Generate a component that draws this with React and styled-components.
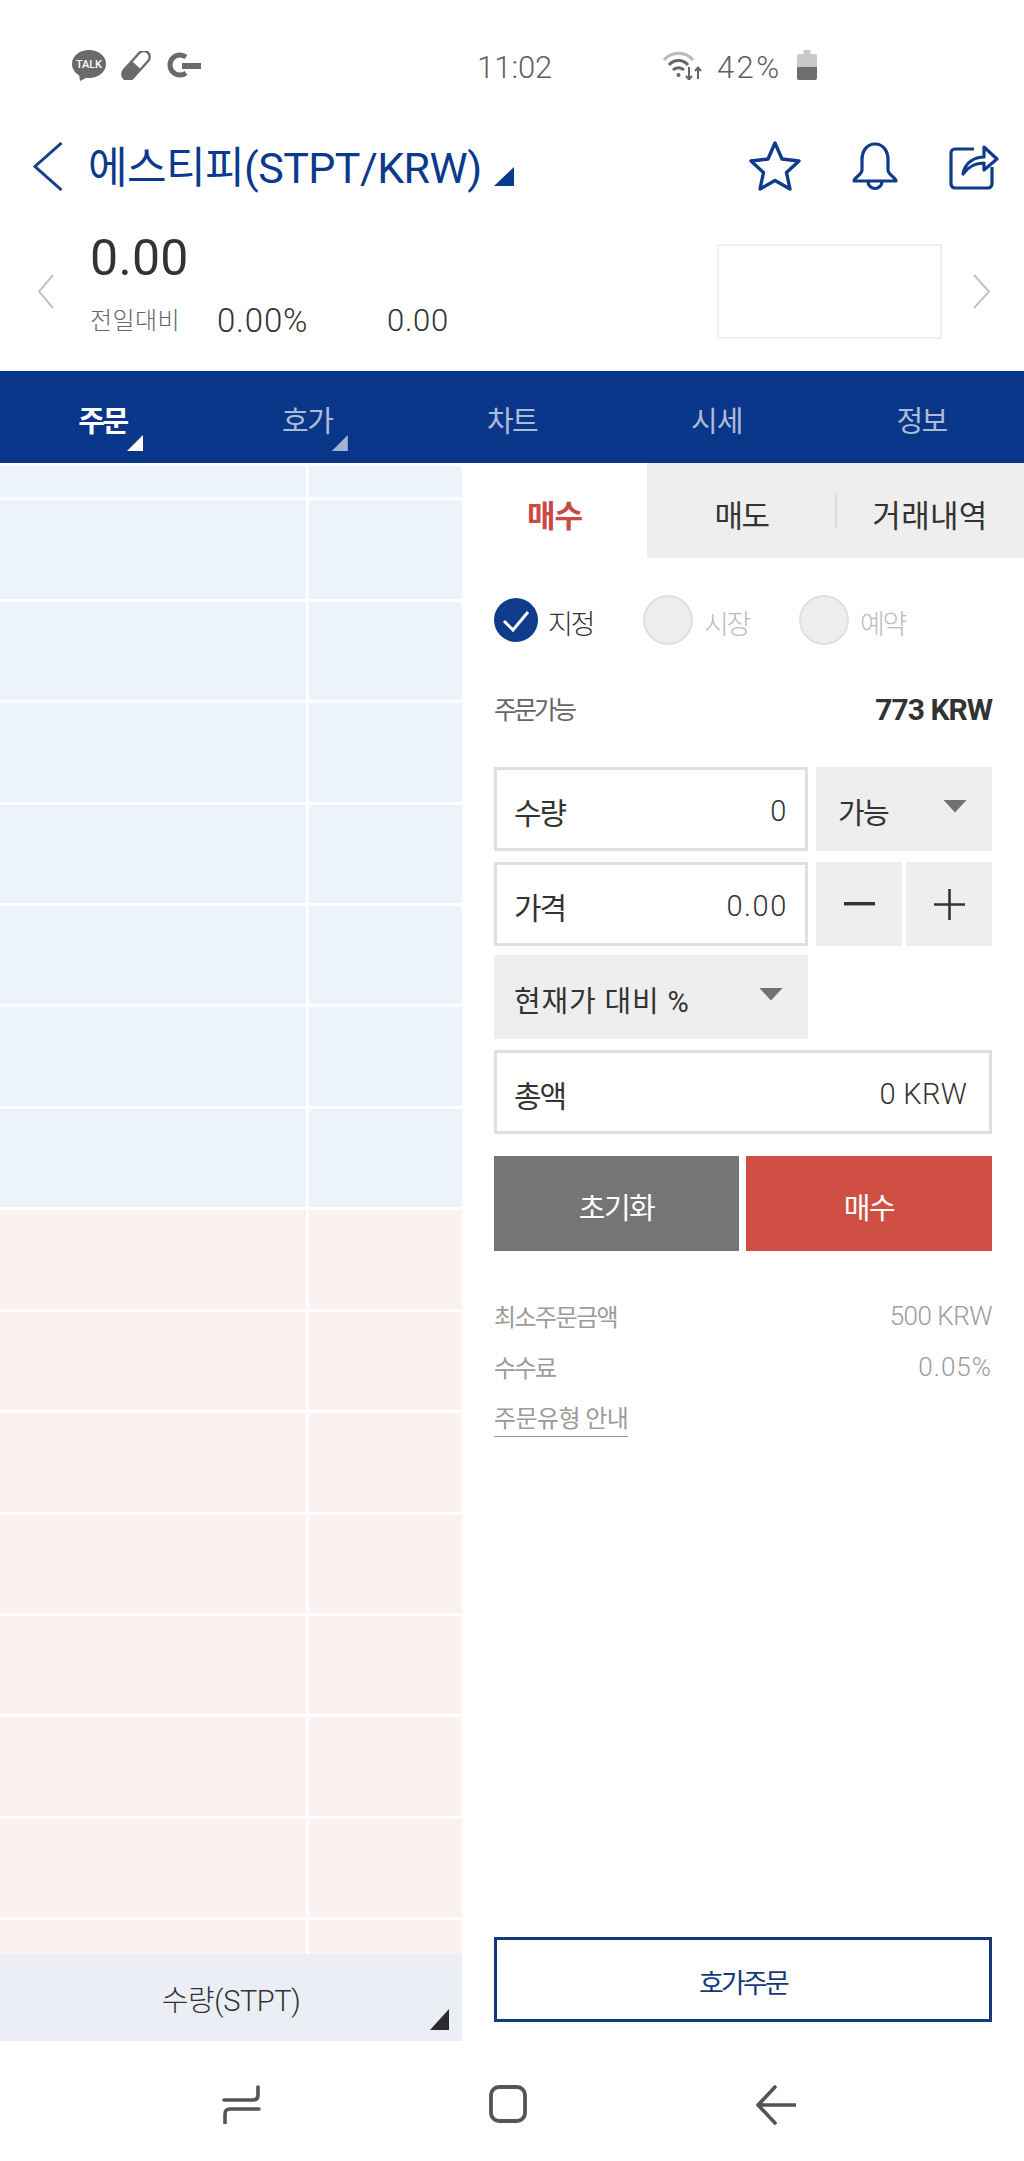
import React from 'react';
import styled, { createGlobalStyle } from 'styled-components';

const GlobalStyle = createGlobalStyle`
    html, body {
        margin: 0;
        padding: 0;
        background: #ffffff;
    }
    * {
        box-sizing: border-box;
    }
`

const Page = styled.div`
    width: 1024px;
    height: 2161px;
    overflow: hidden;
    background: #ffffff;
    display: flex;
    flex-direction: column;
    font-family: Roboto, "Noto Sans CJK KR", sans-serif;
    font-weight: 300;
    color: #333333;
`

const StatusBar = styled.div`
    height: 128px;
    padding: 2px 0 0 72px;
    display: grid;
    grid-template-columns: 405px 186px 1fr;
    align-items: center;
    color: #5f5f5f;
    font-size: 31px;
`
const StatusIcons = styled.div`
    display: flex;
    align-items: center;
    gap: ${props => props.$gap || 15}px;
`
const StatusText = styled.span`
    line-height: 36px;
    padding-top: 5px;
    letter-spacing: ${props => props.$track || 0}px;
`

const TitleBar = styled.div`
    height: 76px;
    padding: 0 25px 0 33px;
    display: flex;
    align-items: center;
`
const Title = styled.h1`
    margin: 0 0 0 25px;
    padding-top: 3px;
    font-size: 43px;
    font-weight: 400;
    letter-spacing: -0.55px;
    color: #0b3a8c;
    line-height: 50px;
`
const TitleMark = styled.svg`
    margin: 20px 0 0 12px;
`
const TitleActions = styled.div`
    margin-left: auto;
    display: flex;
    align-items: center;
    gap: 51px;
`

const Summary = styled.div`
    height: 167px;
    padding: 8px 33px 0 37px;
    display: flex;
    align-items: center;
`
const SummaryInfo = styled.div`
    align-self: flex-start;
    margin: 21px 0 0 37px;
    display: flex;
    flex-direction: column;
`
const Price = styled.div`
    font-size: 50px;
    line-height: 50px;
    font-weight: 400;
    margin-left: -1px;
    letter-spacing: 0.3px;
`
const ChangeRow = styled.div`
    margin-top: 23px;
    display: flex;
    align-items: center;
    line-height: 30px;
    font-size: 31px;
    font-weight: 300;
`
const ChangeLabel = styled.span`
    width: 127px;
    margin-left: -1px;
    font-size: 24px;
    color: #666666;
    letter-spacing: 0.4px;
`
const ChangeValue = styled.span`
    width: 170px;
    font-size: 33px;
    letter-spacing: 0.8px;
`
const ChangeAmount = styled.span`
    font-size: 31px;
    letter-spacing: 0.7px;
`
const Sparkline = styled.div`
    width: 225px;
    height: 95px;
    margin-left: auto;
    margin-right: 31px;
    border: 2px solid #efefef;
`

const TabBar = styled.nav`
    height: 92px;
    background: #0a3689;
    display: grid;
    grid-template-columns: repeat(5, 1fr);
`
const Tab = styled.div`
    position: relative;
    display: flex;
    align-items: center;
    justify-content: center;
    padding-top: 3px;
    font-size: 29px;
    letter-spacing: ${props => props.$track ?? -2.5}px;
    font-weight: ${props => (props.$active ? 700 : 400)};
    color: ${props => (props.$active ? '#ffffff' : '#aebbd6')};
`
const TabMark = styled.i`
    position: absolute;
    left: 127px;
    top: 64px;
    width: 16px;
    height: 16px;
    background: ${props => (props.$active ? '#ffffff' : '#a3b2d1')};
    clip-path: polygon(100% 0, 100% 100%, 0 100%);
`

const Main = styled.div`
    height: 1578px;
    display: grid;
    grid-template-columns: 462px 1fr;
`

const BookColumn = styled.section`
    display: flex;
    flex-direction: column;
    min-height: 0;
`
const Book = styled.div`
    flex: 1;
    min-height: 0;
    overflow: hidden;
    padding-top: 3px;
    display: grid;
    grid-template-columns: 306px 153px;
    grid-auto-rows: 98.43px;
    grid-template-rows: 31.3px;
    gap: 3px;
`
const BookCell = styled.div`
    background: ${props => (props.$side === 'ask' ? '#ecf3fb' : '#fbf1f0')};
`
const BookFooter = styled.div`
    position: relative;
    height: 87px;
    background: #eceef5;
    display: flex;
    align-items: center;
    justify-content: center;
    font-size: 29px;
    font-weight: 300;
    letter-spacing: -0.4px;
`
const FooterMark = styled.i`
    position: absolute;
    right: 13px;
    bottom: 11px;
    width: 19px;
    height: 21px;
    background: #2b2b2b;
    clip-path: polygon(100% 0, 100% 100%, 0 100%);
`

const OrderColumn = styled.section`
    display: flex;
    flex-direction: column;
    min-height: 0;
`
const OrderTabs = styled.div`
    height: 95px;
    display: grid;
    grid-template-columns: 185px 189px 188px;
`
const OrderTab = styled.div`
    display: flex;
    align-items: center;
    justify-content: center;
    position: relative;
    padding-top: 6px;
    font-size: 31px;
    letter-spacing: ${props => props.$track ?? -1.5}px;
    background: ${props => (props.$active ? '#ffffff' : '#eeeeee')};
    color: ${props => (props.$active ? '#c94a42' : '#333333')};
    font-weight: ${props => (props.$active ? 700 : 400)};
`
const TabDivider = styled.i`
    position: absolute;
    left: -1px;
    top: 30px;
    width: 2px;
    height: 35px;
    background: #dcdcdc;
`
const OrderForm = styled.div`
    flex: 1;
    min-height: 0;
    padding: 0 32px 19px;
    display: flex;
    flex-direction: column;
`
const TypeRow = styled.div`
    margin-top: 37px;
    height: 50px;
    display: grid;
    grid-template-columns: 149px 156px 1fr;
    align-items: center;
`
const TypeOption = styled.div`
    display: flex;
    align-items: center;
    font-size: 27px;
    letter-spacing: -2.4px;
    color: ${props => (props.$on ? '#333333' : '#bbbbbb')};
`
const TypeLabel = styled.span`
    margin-left: ${props => (props.$on ? 10 : 11)}px;
    padding-top: 4px;
`
const RadioOff = styled.i`
    width: 50px;
    height: 50px;
    border-radius: 50%;
    border: 2px solid #e0e0e0;
    background: #eeeeee;
`
const AvailableRow = styled.div`
    margin-top: 49px;
    height: 30px;
    display: flex;
    align-items: center;
    justify-content: space-between;
`
const AvailableLabel = styled.span`
    font-size: 25px;
    letter-spacing: -3px;
    color: #666666;
    font-weight: 400;
    padding-bottom: 3px;
`
const AvailableValue = styled.span`
    font-size: 30px;
    font-weight: 700;
    letter-spacing: -1px;
    color: #333333;
`
const Fields = styled.div`
    margin-top: 43px;
    display: grid;
    grid-template-columns: 314px 1fr;
    grid-template-rows: 95px 93px 95px 84px;
    column-gap: 8px;
`
const InputBox = styled.div`
    height: 84px;
    border: 3px solid #dfdfdf;
    padding: 3px 19px 0 17px;
    display: flex;
    align-items: center;
    justify-content: space-between;
    font-size: 30px;
    grid-column: ${props => (props.$wide ? '1 / -1' : 'auto')};
`
const InputLabel = styled.span`
    font-weight: 400;
    letter-spacing: -2px;
    color: #333333;
`
const InputValue = styled.span`
    font-size: 29px;
    font-weight: 300;
    letter-spacing: ${props => (props.$wide ? 0.3 : 1.6)}px;
    margin-right: ${props => (props.$wide ? 3 : -2)}px;
`
const SelectBox = styled.div`
    height: 84px;
    background: #eeeeee;
    padding: 3px 25px 0 ${props => props.$left || 22}px;
    display: flex;
    align-items: center;
    justify-content: space-between;
    font-size: 29px;
    font-weight: 400;
    letter-spacing: ${props => props.$track ?? -1.6}px;
`
const SelectMark = styled.i`
    width: 24px;
    height: 13px;
    margin-bottom: 9px;
    background: #717171;
    clip-path: polygon(0 0, 100% 0, 50% 100%);
`
const Stepper = styled.div`
    height: 84px;
    display: grid;
    grid-template-columns: 1fr 1fr;
    gap: 4px;
`
const StepButton = styled.div`
    background: #eeeeee;
    display: flex;
    align-items: center;
    justify-content: center;
`
const Actions = styled.div`
    margin-top: 22px;
    display: grid;
    grid-template-columns: 245px 246px;
    gap: 7px;
`
const ActionButton = styled.button`
    height: 95px;
    padding: 4px 0 0;
    border: 0;
    background: ${props => (props.$buy ? '#d04f45' : '#757575')};
    color: #ffffff;
    font-family: inherit;
    font-size: 29px;
    font-weight: 400;
    letter-spacing: -1.5px;
`
const InfoList = styled.div`
    margin-top: 39px;
    font-size: 24px;
    color: #9b9b9b;
`
const InfoRow = styled.div`
    height: 51px;
    display: flex;
    align-items: center;
    justify-content: space-between;
`
const InfoLabel = styled.span`
    font-weight: 400;
    letter-spacing: -1.6px;
`
const InfoValue = styled.span`
    font-size: 26px;
    font-weight: 300;
    letter-spacing: ${props => props.$track ?? -0.5}px;
`
const GuideLink = styled.a`
    margin-top: 5px;
    padding-bottom: 2px;
    border-bottom: 1px solid #999999;
    font-weight: 400;
    letter-spacing: -0.6px;
    line-height: 30px;
`
const BookOrderButton = styled.button`
    margin-top: auto;
    height: 85px;
    padding: 4px 0 0;
    border: 3px solid #153a7c;
    background: #ffffff;
    color: #153a7c;
    font-family: inherit;
    font-size: 27px;
    font-weight: 400;
    letter-spacing: -2.8px;
`

const SoftKeys = styled.div`
    height: 120px;
    padding: 44px 0 0 222px;
    display: flex;
    align-items: flex-start;
    gap: 228px;
`

const askRows = Array.from({ length: 8 });
const bidRows = Array.from({ length: 8 });

const App = () => {
    return (
        <Page>
            <GlobalStyle />
            <StatusBar>
                <StatusIcons>
                    <svg width="34" height="31" viewBox="0 0 34 31">
                        <ellipse cx="17" cy="14" rx="17" ry="14" fill="#6a6a6a" />
                        <path d="M7 24 L8 31 L16 27 Z" fill="#6a6a6a" />
                        <text x="17" y="18" textAnchor="middle" fontSize="11" fontFamily="Roboto" fontWeight="500" fill="#fff" textLength="26">TALK</text>
                    </svg>
                    <svg width="30" height="29" viewBox="0 0 30 29">
                        <g transform="rotate(42 15 14.5)">
                            <rect x="9" y="-3" width="12" height="35" rx="6" fill="#ffffff" stroke="#6a6a6a" strokeWidth="2.4" />
                            <path d="M9 14 H21 V26 A6 6 0 0 1 9 26 Z" fill="#6a6a6a" />
                        </g>
                    </svg>
                    <svg width="35" height="26" viewBox="0 0 35 26">
                        <path d="M20 5 A10 10 0 1 0 20 21" fill="none" stroke="#6a6a6a" strokeWidth="5" />
                        <rect x="16" y="11" width="19" height="6" fill="#6a6a6a" />
                    </svg>
                </StatusIcons>
                <StatusText>11:02</StatusText>
                <StatusIcons $gap={15}>
                    <svg width="39" height="29" viewBox="0 0 39 29">
                        <path d="M1 9 C9 0 22 0 30 9" fill="none" stroke="#b9b9b9" strokeWidth="3" />
                        <path d="M6 14 C11 8 20 8 25 14" fill="none" stroke="#666" strokeWidth="3" />
                        <path d="M10 19 C13 16 18 16 21 19" fill="none" stroke="#666" strokeWidth="3" />
                        <circle cx="15.5" cy="24" r="2" fill="#666" />
                        <path d="M26 16 V28 M23 25 L26 28.5 L29 25" fill="none" stroke="#666" strokeWidth="2" />
                        <path d="M35 28 V17 M32 20 L35 16.5 L38 20" fill="none" stroke="#666" strokeWidth="2" />
                    </svg>
                    <StatusText $track={2.4}>42%</StatusText>
                    <svg width="20" height="30" viewBox="0 0 20 30">
                        <rect x="6.5" y="0" width="7" height="5" fill="#c9c9c9" />
                        <rect x="0" y="4" width="20" height="26" rx="2" fill="#c9c9c9" />
                        <path d="M0 17 H20 V28 A2 2 0 0 1 18 30 H2 A2 2 0 0 1 0 28 Z" fill="#6e6e6e" />
                    </svg>
                </StatusIcons>
            </StatusBar>

            <TitleBar>
                <svg width="30" height="49" viewBox="0 0 30 49">
                    <polyline points="28.5,1 2,24.5 28.5,48" fill="none" stroke="#153f8a" strokeWidth="3" />
                </svg>
                <Title>에스티피(STPT/KRW)</Title>
                <TitleMark width="20" height="19" viewBox="0 0 20 19">
                    <polygon points="20,0 20,19 0,19" fill="#0b3a8c" />
                </TitleMark>
                <TitleActions>
                    <svg width="52" height="50" viewBox="0 0 52 50">
                        <polygon points="26,2 33,18 50,20 37.5,31.5 41,48 26,39.5 11,48 14.5,31.5 2,20 19,18" fill="none" stroke="#0f3c8a" strokeWidth="3.4" strokeLinejoin="round" />
                    </svg>
                    <svg width="46" height="49" viewBox="0 0 46 49">
                        <path d="M23 2 C14 2 10 10 10 18 V28 C10 33 2 35 2 39 H44 C44 35 36 33 36 28 V18 C36 10 32 2 23 2 Z" fill="none" stroke="#0f3c8a" strokeWidth="3.2" strokeLinejoin="round" />
                        <path d="M16 39.5 A7 7 0 0 0 30 39.5" fill="none" stroke="#0f3c8a" strokeWidth="3.2" />
                    </svg>
                    <svg width="50" height="47" viewBox="0 0 50 47">
                        <path d="M25 6 H6 A4 4 0 0 0 2 10 V41 A4 4 0 0 0 6 45 H39 A4 4 0 0 0 43 41 V24" fill="none" stroke="#0f3c8a" strokeWidth="3.2" />
                        <path d="M14 31 C16 19 26 14 35 14 V4 L48 16 L35 27 V20 C26 20 19 24 14 31 Z" fill="#ffffff" stroke="#0f3c8a" strokeWidth="3.2" strokeLinejoin="round" />
                    </svg>
                </TitleActions>
            </TitleBar>

            <Summary>
                <svg width="17" height="35" viewBox="0 0 17 35">
                    <polyline points="16,1 2,17.5 16,34" fill="none" stroke="#c4c4c4" strokeWidth="2" />
                </svg>
                <SummaryInfo>
                    <Price>0.00</Price>
                    <ChangeRow>
                        <ChangeLabel>전일대비</ChangeLabel>
                        <ChangeValue>0.00%</ChangeValue>
                        <ChangeAmount>0.00</ChangeAmount>
                    </ChangeRow>
                </SummaryInfo>
                <Sparkline />
                <svg width="18" height="35" viewBox="0 0 18 35">
                    <polyline points="1,1 16,17.5 1,34" fill="none" stroke="#c4c4c4" strokeWidth="2" />
                </svg>
            </Summary>

            <TabBar>
                <Tab $active>주문<TabMark $active /></Tab>
                <Tab $track={-1.6}>호가<TabMark /></Tab>
                <Tab $track={-1.6}>차트</Tab>
                <Tab $track={-1}>시세</Tab>
                <Tab $track={-1.6}>정보</Tab>
            </TabBar>

            <Main>
                <BookColumn>
                    <Book>
                        {askRows.map((_, i) => (
                            <React.Fragment key={i}>
                                <BookCell $side="ask" />
                                <BookCell $side="ask" />
                            </React.Fragment>
                        ))}
                        {bidRows.map((_, i) => (
                            <React.Fragment key={i}>
                                <BookCell $side="bid" />
                                <BookCell $side="bid" />
                            </React.Fragment>
                        ))}
                    </Book>
                    <BookFooter>
                        수량(STPT)
                        <FooterMark />
                    </BookFooter>
                </BookColumn>

                <OrderColumn>
                    <OrderTabs>
                        <OrderTab $active $track={-1}>매수</OrderTab>
                        <OrderTab>매도</OrderTab>
                        <OrderTab $track={0.3}><TabDivider />거래내역</OrderTab>
                    </OrderTabs>
                    <OrderForm>
                        <TypeRow>
                            <TypeOption $on>
                                <svg width="44" height="44" viewBox="0 0 44 44">
                                    <circle cx="22" cy="22" r="22" fill="#0f3c8a" />
                                    <polyline points="10,23 19,32 34,14" fill="none" stroke="#ffffff" strokeWidth="3" />
                                </svg>
                                <TypeLabel $on>지정</TypeLabel>
                            </TypeOption>
                            <TypeOption>
                                <RadioOff />
                                <TypeLabel>시장</TypeLabel>
                            </TypeOption>
                            <TypeOption>
                                <RadioOff />
                                <TypeLabel>예약</TypeLabel>
                            </TypeOption>
                        </TypeRow>
                        <AvailableRow>
                            <AvailableLabel>주문가능</AvailableLabel>
                            <AvailableValue>773 KRW</AvailableValue>
                        </AvailableRow>
                        <Fields>
                            <InputBox>
                                <InputLabel>수량</InputLabel>
                                <InputValue>0</InputValue>
                            </InputBox>
                            <SelectBox>
                                가능
                                <SelectMark />
                            </SelectBox>
                            <InputBox>
                                <InputLabel>가격</InputLabel>
                                <InputValue>0.00</InputValue>
                            </InputBox>
                            <Stepper>
                                <StepButton>
                                    <svg width="31" height="4" viewBox="0 0 31 4">
                                        <rect width="31" height="3.4" fill="#333" />
                                    </svg>
                                </StepButton>
                                <StepButton>
                                    <svg width="31" height="31" viewBox="0 0 31 31">
                                        <path d="M0 15.5 H31 M15.5 0 V31" stroke="#333" strokeWidth="2.6" />
                                    </svg>
                                </StepButton>
                            </Stepper>
                            <SelectBox $left={20} $track={0.8}>
                                현재가 대비 %
                                <SelectMark />
                            </SelectBox>
                            <span />
                            <InputBox $wide>
                                <InputLabel>총액</InputLabel>
                                <InputValue $wide>0 KRW</InputValue>
                            </InputBox>
                        </Fields>
                        <Actions>
                            <ActionButton>초기화</ActionButton>
                            <ActionButton $buy>매수</ActionButton>
                        </Actions>
                        <InfoList>
                            <InfoRow>
                                <InfoLabel>최소주문금액</InfoLabel>
                                <InfoValue>500 KRW</InfoValue>
                            </InfoRow>
                            <InfoRow>
                                <InfoLabel>수수료</InfoLabel>
                                <InfoValue $track={1}>0.05%</InfoValue>
                            </InfoRow>
                            <InfoRow>
                                <GuideLink>주문유형 안내</GuideLink>
                            </InfoRow>
                        </InfoList>
                        <BookOrderButton>호가주문</BookOrderButton>
                    </OrderForm>
                </OrderColumn>
            </Main>

            <SoftKeys>
                <svg width="39" height="39" viewBox="0 0 39 39">
                    <path d="M36 2 V10 Q36 15 31 15 H2 M37 24 H8 Q3 24 3 29 V38" fill="none" stroke="#555" strokeWidth="3.6" strokeLinecap="round" />
                </svg>
                <svg width="38" height="38" viewBox="0 0 38 38">
                    <rect x="2" y="2" width="34" height="34" rx="8" fill="none" stroke="#555" strokeWidth="3.8" />
                </svg>
                <svg width="41" height="40" viewBox="0 0 41 40">
                    <path d="M20 2 L3 20 L20 38 M3 20 H40" fill="none" stroke="#555" strokeWidth="3.6" strokeLinecap="round" strokeLinejoin="round" />
                </svg>
            </SoftKeys>
        </Page>
    )
}

export default App;
